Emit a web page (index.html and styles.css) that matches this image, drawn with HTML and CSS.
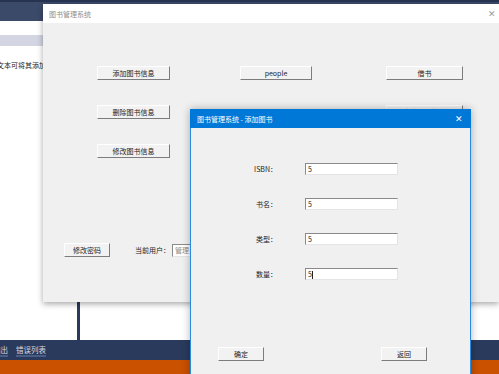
FILE: index.html
```html
<!DOCTYPE html>
<html lang="zh-CN">
<head>
    <meta charset="UTF-8">
    <title>图书管理系统</title>
    <link rel="stylesheet" href="styles.css">
</head>
<body>
    <div class="ide">
        <div class="ide-top"></div>
        <div class="ide-gap"></div>
        <div class="ide-tools"></div>
        <div class="ide-main">
            <div class="ide-left">
                <p class="ide-hint">文本可将其添加到工具箱</p>
            </div>
            <div class="ide-right"></div>
        </div>
        <div class="ide-status">
            <span class="tab">输出</span>
            <span class="tab">错误列表</span>
        </div>
        <div class="ide-bottom"></div>
    </div>

    <div class="win main-win">
        <div class="win-title">
            <span>图书管理系统</span>
            <span class="win-close">✕</span>
        </div>
        <div class="win-body">
            <div class="menu-grid">
                <button class="btn">添加图书信息</button>
                <button class="btn btn-people">people</button>
                <button class="btn">借书</button>
                <button class="btn">删除图书信息</button>
                <span></span>
                <button class="btn">查询图书信息</button>
                <button class="btn">修改图书信息</button>
            </div>
            <div class="user-row">
                <button class="btn btn-small">修改密码</button>
                <span class="user-label">当前用户：</span>
                <span class="field user-field">管理员</span>
            </div>
        </div>
    </div>

    <div class="win dialog">
        <div class="dialog-title">
            <span>图书管理系统 - 添加图书</span>
            <span class="dialog-close">✕</span>
        </div>
        <div class="dialog-body">
            <div class="form">
                <label>ISBN：</label><span class="field">5</span>
                <label>书名：</label><span class="field">5</span>
                <label>类型：</label><span class="field">5</span>
                <label>数量：</label><span class="field">5<i class="caret"></i></span>
            </div>
            <div class="dialog-actions">
                <button class="btn btn-small">确定</button>
                <button class="btn btn-small">返回</button>
            </div>
        </div>
    </div>
</body>
</html>
```

FILE: styles.css
```css
body {
    margin: 0;
    width: 499px;
    height: 374px;
    overflow: hidden;
    position: relative;
    font-family: "Noto Sans CJK SC", "Noto Sans", sans-serif;
    font-size: 7px;
    color: #222;
    background: #fff;
}

/* background IDE */
.ide {
    display: flex;
    flex-direction: column;
    height: 374px;
}

.ide-top {
    height: 19px;
    background: #3b4a69;
    border-top: 2px solid #263452;
}

.ide-gap {
    height: 14px;
    background: #fff;
}

.ide-tools {
    height: 11px;
    background: #d3d6e2;
}

.ide-main {
    flex: 1;
    display: flex;
}

.ide-left {
    width: 77px;
    border-right: 3px solid #2b3a5c;
    overflow: hidden;
}

.ide-hint {
    margin: 14px 0 0 -3px;
    white-space: nowrap;
}

.ide-right {
    flex: 1;
}

.ide-status {
    height: 20px;
    background: #2a3a5c;
    display: flex;
    align-items: center;
    gap: 8px;
    padding-left: 0;
    margin-left: -7px;
}

.ide-status .tab {
    color: #d6dbe6;
    font-size: 7.5px;
    border-bottom: 2px solid #4a5d86;
    line-height: 11px;
}

.ide-bottom {
    height: 14px;
    background: #ca5100;
}

/* windows */
.win {
    position: absolute;
    display: flex;
    flex-direction: column;
    background: #f0f0f0;
}

.main-win {
    left: 43px;
    top: 4px;
    width: 456px;
    height: 298px;
    box-shadow: 0 2px 6px rgba(0, 0, 0, 0.35);
}

.win-title {
    height: 19px;
    background: #fff;
    color: #8e8e8e;
    display: flex;
    align-items: center;
    justify-content: space-between;
    padding: 0 3px 0 6px;
}

.win-close {
    font-size: 9px;
    color: #9a9a9a;
}

.win-body {
    flex: 1;
    padding: 43px 0 0 54px;
}

.menu-grid {
    display: grid;
    grid-template-columns: 143px 146px 77px;
    grid-auto-rows: 14px;
    row-gap: 25px;
}

.btn {
    font: inherit;
    color: #222;
    background: #f2f2f2;
    border: 1px solid;
    border-color: #fff #7c7c7c #7c7c7c #fdfdfd;
    padding: 0;
    height: 14px;
    width: 73px;
    line-height: 11px;
}

.btn-people {
    width: 72px;
}

.menu-grid .btn:nth-child(3),
.menu-grid .btn:nth-child(6) {
    width: 77px;
}

.user-row {
    display: flex;
    align-items: center;
    margin: 85px 0 0 -33px;
}

.btn-small {
    width: 46px;
    height: 14px;
}

.user-label {
    margin-left: 25px;
}

.field {
    display: block;
    height: 12px;
    box-sizing: border-box;
    background: #fff;
    border: 1px solid;
    border-color: #8a8a8a #e4e4e4 #e4e4e4 #8a8a8a;
    line-height: 10px;
    padding-left: 2px;
    color: #222;
}

.user-field {
    margin-left: 2px;
    width: 60px;
    height: 13px;
    color: #8a8a8a;
}

/* dialog */
.dialog {
    left: 190px;
    top: 109px;
    width: 281px;
    height: 275px;
    box-sizing: border-box;
    border: 1px solid #2a8ae0;
    border-top: none;
    box-shadow: 0 0 8px rgba(0, 0, 0, 0.3);
}

.dialog-title {
    height: 19px;
    margin: 0 -1px;
    background: #0078d7;
    color: #fff;
    display: flex;
    align-items: center;
    justify-content: space-between;
    padding: 0 8px 0 7px;
    font-size: 7px;
}

.dialog-close {
    font-size: 9px;
}

.dialog-body {
    flex: 1;
    padding: 35px 0 0 56px;
}

.form {
    display: grid;
    grid-template-columns: 30px 93px;
    grid-auto-rows: 12px;
    column-gap: 28px;
    row-gap: 23px;
    align-items: center;
}

.form label {
    text-align: right;
    line-height: 12px;
}

.caret {
    display: inline-block;
    width: 1px;
    height: 8px;
    background: #222;
    vertical-align: middle;
}

.dialog-actions {
    display: flex;
    gap: 117px;
    margin: 67px 0 0 -29px;
}
```
